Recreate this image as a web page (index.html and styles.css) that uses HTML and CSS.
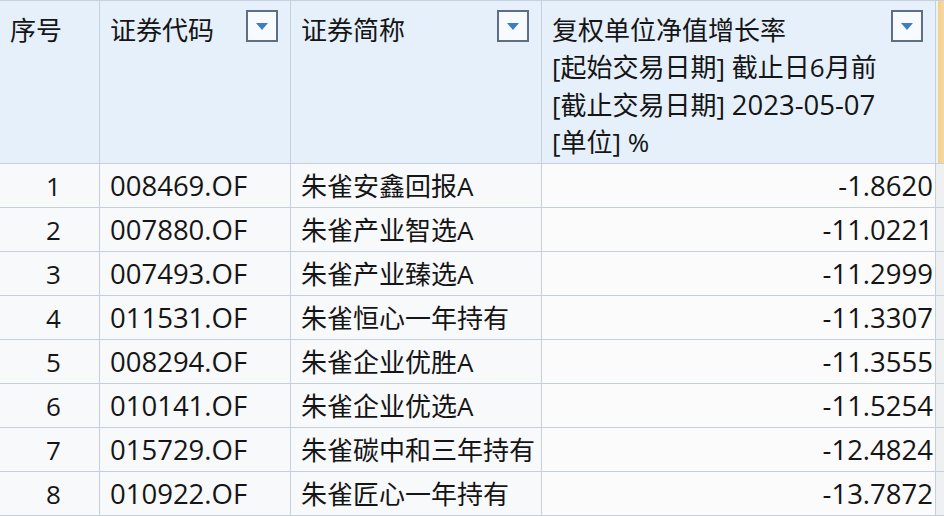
FILE: index.html
```html
<!DOCTYPE html>
<html lang="zh-CN">
<head>
<meta charset="utf-8">
<title>朱雀基金 复权单位净值增长率</title>
<link rel="stylesheet" href="styles.css">
</head>
<body>
<div class="grid">
  <div class="hd"><span class="ht">序号</span></div>
  <div class="hd"><span class="ht">证券代码</span><span class="dd"><svg viewBox="0 0 12 7" width="12" height="7"><path d="M0 0H12L6 7Z"/></svg></span></div>
  <div class="hd"><span class="ht">证券简称</span><span class="dd"><svg viewBox="0 0 12 7" width="12" height="7"><path d="M0 0H12L6 7Z"/></svg></span></div>
  <div class="hd"><span class="ht">复权单位净值增长率<br>[起始交易日期] 截止日6月前<br>[截止交易日期] <span class="lat">2023-05-07</span><br>[单位] %</span><span class="dd"><svg viewBox="0 0 12 7" width="12" height="7"><path d="M0 0H12L6 7Z"/></svg></span></div>
  <div class="hd edge-top"></div>

  <div class="c num">1</div><div class="c code">008469.OF</div><div class="c">朱雀安鑫回报A</div><div class="c val">-1.8620</div><div class="c edge"></div>
  <div class="c num">2</div><div class="c code">007880.OF</div><div class="c">朱雀产业智选A</div><div class="c val">-11.0221</div><div class="c edge"></div>
  <div class="c num">3</div><div class="c code">007493.OF</div><div class="c">朱雀产业臻选A</div><div class="c val">-11.2999</div><div class="c edge"></div>
  <div class="c num">4</div><div class="c code">011531.OF</div><div class="c">朱雀恒心一年持有</div><div class="c val">-11.3307</div><div class="c edge"></div>
  <div class="c num">5</div><div class="c code">008294.OF</div><div class="c">朱雀企业优胜A</div><div class="c val">-11.3555</div><div class="c edge"></div>
  <div class="c num">6</div><div class="c code">010141.OF</div><div class="c">朱雀企业优选A</div><div class="c val">-11.5254</div><div class="c edge"></div>
  <div class="c num">7</div><div class="c code">015729.OF</div><div class="c">朱雀碳中和三年持有</div><div class="c val">-12.4824</div><div class="c edge"></div>
  <div class="c num">8</div><div class="c code">010922.OF</div><div class="c">朱雀匠心一年持有</div><div class="c val">-13.7872</div><div class="c edge"></div>
</div>
</body>
</html>
```
FILE: styles.css
```css
html, body {
  margin: 0;
  padding: 0;
  background: #f4f6f8;
  overflow: hidden;
}
.grid {
  display: grid;
  grid-template-columns: 99px 190px 250px 393px 1fr;
  grid-template-rows: 162px repeat(8, 43px);
  gap: 1px;
  padding-top: 1px;
  background: #c5d0dc;
  font-family: "Open Sans", "Noto Sans CJK SC", sans-serif;
  font-size: 26px;
  color: #151515;
  width: 944px;
  height: 516px;
  box-sizing: border-box;
}
.hd {
  background: #e6f0fa;
  display: flex;
  justify-content: space-between;
  align-items: flex-start;
  padding: 11px 12px 0 10px;
}
.ht {
  line-height: 37px;
  white-space: nowrap;
}
.lat {
  font-size: 27.5px;
}
.dd {
  flex: none;
  width: 32px;
  height: 32px;
  box-sizing: border-box;
  margin-top: -2px;
  border: 2px solid #5e6f85;
  background: #f7fbff;
  display: flex;
  align-items: center;
  justify-content: center;
}
.dd svg {
  fill: #3f7cc6;
}
.hd.edge-top {
  padding: 0;
  background: linear-gradient(90deg, #eef1f4 0 2px, #f3d08d 2px, #f6d9a0);
}
.c {
  background: #f8f9fb;
  display: flex;
  align-items: center;
  padding: 0 10px;
  white-space: nowrap;
  line-height: 1;
}
.c.num {
  justify-content: center;
  padding: 0 0 0 8px;
}
.c.code {
  font-size: 27.5px;
}
.c.val {
  justify-content: flex-end;
  padding: 0 2px 0 0;
  background: #fbfbfc;
  font-size: 27.5px;
}
.c.edge {
  padding: 0;
  background: #eef0f2;
}
```
